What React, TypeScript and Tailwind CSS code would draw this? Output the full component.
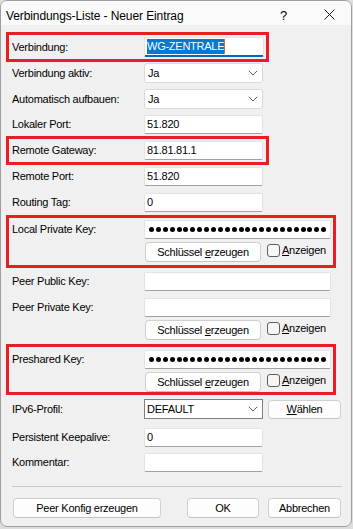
import React from "react";

const F = "font-['Liberation_Sans',Arial,sans-serif]";

function Chevron() {
  return (
    <svg width="10" height="6" viewBox="0 0 10 6" className="absolute right-[4px] top-1/2 -translate-y-1/2">
      <path d="M0.8 0.8 L5 5 L9.2 0.8" fill="none" stroke="#5c5c5c" strokeWidth="1" />
    </svg>
  );
}

function TextBox({ value, w = "w-[119px]", h = "h-[19px]" }: { value?: string; w?: string; h?: string }) {
  return (
    <div className={`${w} ${h} bg-white border border-[#e3e3e3] border-b-[#a2a2a2] rounded-[2px] flex items-center pl-[2px] text-black`}>
      {value}
    </div>
  );
}

function Select({ value, h = "h-[20px]" }: { value: string; h?: string }) {
  return (
    <div className={`relative w-[119px] ${h} bg-white border border-[#d9d9d9] rounded-[3px] flex items-center pl-[3px] text-black`}>
      {value}
      <Chevron />
    </div>
  );
}

function Dots() {
  const arr = Array.from({ length: 26 });
  return (
    <div className="w-[187px] h-[19px] bg-white border border-[#e3e3e3] border-b-[#a2a2a2] rounded-[2px] flex items-center pl-[3px]">
      {arr.map((_, i) => (
        <span key={i} className="w-[6.9px] flex justify-center items-center">
          <span className="block w-[5px] h-[5px] rounded-full bg-black" />
        </span>
      ))}
    </div>
  );
}

function Btn({ children, w, h = "h-[20px]", extra = "" }: { children: React.ReactNode; w: string; h?: string; extra?: string }) {
  return (
    <div className={`${w} ${h} bg-[#fdfdfd] border border-[#d0d0d0] border-b-[#c2c2c2] rounded-[4px] flex items-center justify-center text-black ${extra}`}>
      {children}
    </div>
  );
}

function KeyButtons() {
  return (
    <div className="flex items-center">
      <Btn w="w-[116px] ml-[1px]">
        <span>
          Schlüssel <span className="underline underline-offset-1">e</span>rzeugen
        </span>
      </Btn>
      <div className="flex items-center ml-[6px] -mt-[3px]">
        <span className="block w-[13px] h-[13px] rounded-[3px] border border-[#5e5e5e] bg-[#f6f6f6]" />
        <span className="ml-[2px] text-black">
          <span className="underline underline-offset-1">A</span>nzeigen
        </span>
      </div>
    </div>
  );
}

function Label({ children }: { children: React.ReactNode }) {
  return <div className="w-[132px] shrink-0 text-black">{children}</div>;
}

export default function App() {
  return (
    <div className={`w-[353px] h-[529px] bg-[#dedede] overflow-hidden ${F} text-[11px] tracking-[-0.25px] leading-none`}>
      <div className="w-[352px] h-[527px] rounded-[7px] border border-[#9e9e9e] bg-[#f0f0f0] overflow-hidden flex flex-col">
        {/* Title bar */}
        <div className="h-[24px] shrink-0 bg-[#fafafa] flex items-center pl-[5px] relative">
          <span className="text-[12px] tracking-[-0.1px] text-black mt-[6px]">Verbindungs-Liste - Neuer Eintrag</span>
          <span className="absolute left-[279px] top-[8px] text-[13px] text-black tracking-normal">?</span>
          <svg width="11" height="11" viewBox="0 0 11 11" className="absolute left-[323px] top-[8px]">
            <path d="M0.5 0.5 L10.5 10.5 M10.5 0.5 L0.5 10.5" stroke="#1a1a1a" strokeWidth="1" />
          </svg>
        </div>

        {/* Box 1 */}
        <div className="mt-[7px] ml-[5px] w-[263px] border-[3px] border-[#ec1c24] pt-[2px] pb-[2px] pl-[3px] flex items-center">
          <Label>Verbindung:</Label>
          <div className="w-[120px] h-[20px] bg-white border border-[#e3e3e3] border-b-[2px] border-b-[#0067c0] rounded-[2px] flex items-center pl-[2px]">
            <span className="bg-[#0078d7] text-white px-[0px] h-[15px] flex items-center">WG-ZENTRALE</span>
            <span className="block w-[1px] h-[15px] bg-[#c87a2a]" />
          </div>
        </div>

        <div className="mt-[1px] pl-[11px] flex items-center">
          <Label>Verbindung aktiv:</Label>
          <Select value="Ja" />
        </div>
        <div className="mt-[6px] pl-[11px] flex items-center">
          <Label>Automatisch aufbauen:</Label>
          <Select value="Ja" />
        </div>
        <div className="mt-[6px] pl-[11px] flex items-center">
          <Label>Lokaler Port:</Label>
          <TextBox value="51.820" />
        </div>

        {/* Box 2 */}
        <div className="mt-[2px] ml-[5px] w-[263px] border-[3px] border-[#ec1c24] pt-[2px] pb-[2px] pl-[3px] flex items-center">
          <Label>Remote Gateway:</Label>
          <TextBox value="81.81.81.1" />
        </div>

        <div className="mt-[2px] pl-[11px] flex items-center">
          <Label>Remote Port:</Label>
          <TextBox value="51.820" />
        </div>
        <div className="mt-[7px] pl-[11px] flex items-center">
          <Label>Routing Tag:</Label>
          <TextBox value="0" />
        </div>

        {/* Box 3 */}
        <div className="mt-[3px] ml-[5px] w-[330px] border-[3px] border-[#ec1c24] pt-[2px] pb-[3px] pl-[3px] flex flex-col">
          <div className="flex items-center">
            <Label>Local Private Key:</Label>
            <Dots />
          </div>
          <div className="flex mt-[3px]">
            <div className="w-[132px]" />
            <KeyButtons />
          </div>
        </div>

        <div className="mt-[4px] pl-[11px] flex items-center">
          <Label>Peer Public Key:</Label>
          <TextBox w="w-[187px]" />
        </div>
        <div className="mt-[7px] pl-[11px] flex items-center">
          <Label>Peer Private Key:</Label>
          <TextBox w="w-[187px]" />
        </div>
        <div className="mt-[3px] pl-[11px] flex">
          <div className="w-[132px]" />
          <KeyButtons />
        </div>

        {/* Box 4 */}
        <div className="mt-[4px] ml-[5px] w-[330px] border-[3px] border-[#ec1c24] pt-[3px] pb-0 pl-[3px] flex flex-col">
          <div className="flex items-center">
            <Label>Preshared Key:</Label>
            <Dots />
          </div>
          <div className="flex mt-[3px]">
            <div className="w-[132px]" />
            <KeyButtons />
          </div>
        </div>

        <div className="mt-[4px] pl-[11px] flex items-center">
          <Label>IPv6-Profil:</Label>
          <div className="relative w-[119px] h-[20px] bg-white border border-[#7f7f7f] flex items-center pl-[2px] text-black">
            DEFAULT
            <Chevron />
          </div>
          <Btn w="w-[73px] ml-[5px]" h="h-[19px]">
            <span>
              <span className="underline underline-offset-1">W</span>ählen
            </span>
          </Btn>
        </div>

        <div className="mt-[9px] pl-[11px] flex items-center">
          <Label>Persistent Keepalive:</Label>
          <TextBox value="0" />
        </div>
        <div className="mt-[6px] pl-[11px] flex items-center">
          <Label>Kommentar:</Label>
          <TextBox />
        </div>

        <div className="mt-[14px] ml-[11px] w-[330px] h-[1px] bg-[#c9c9c9]" />

        <div className="mt-[11px] pl-[12px] flex items-center">
          <Btn w="w-[148px]" extra="border-[#0067c0] border-b-[#0067c0]">Peer Konfig erzeugen</Btn>
          <Btn w="w-[72px] ml-[26px]">OK</Btn>
          <Btn w="w-[73px] ml-[9px]">Abbrechen</Btn>
        </div>
      </div>
    </div>
  );
}
